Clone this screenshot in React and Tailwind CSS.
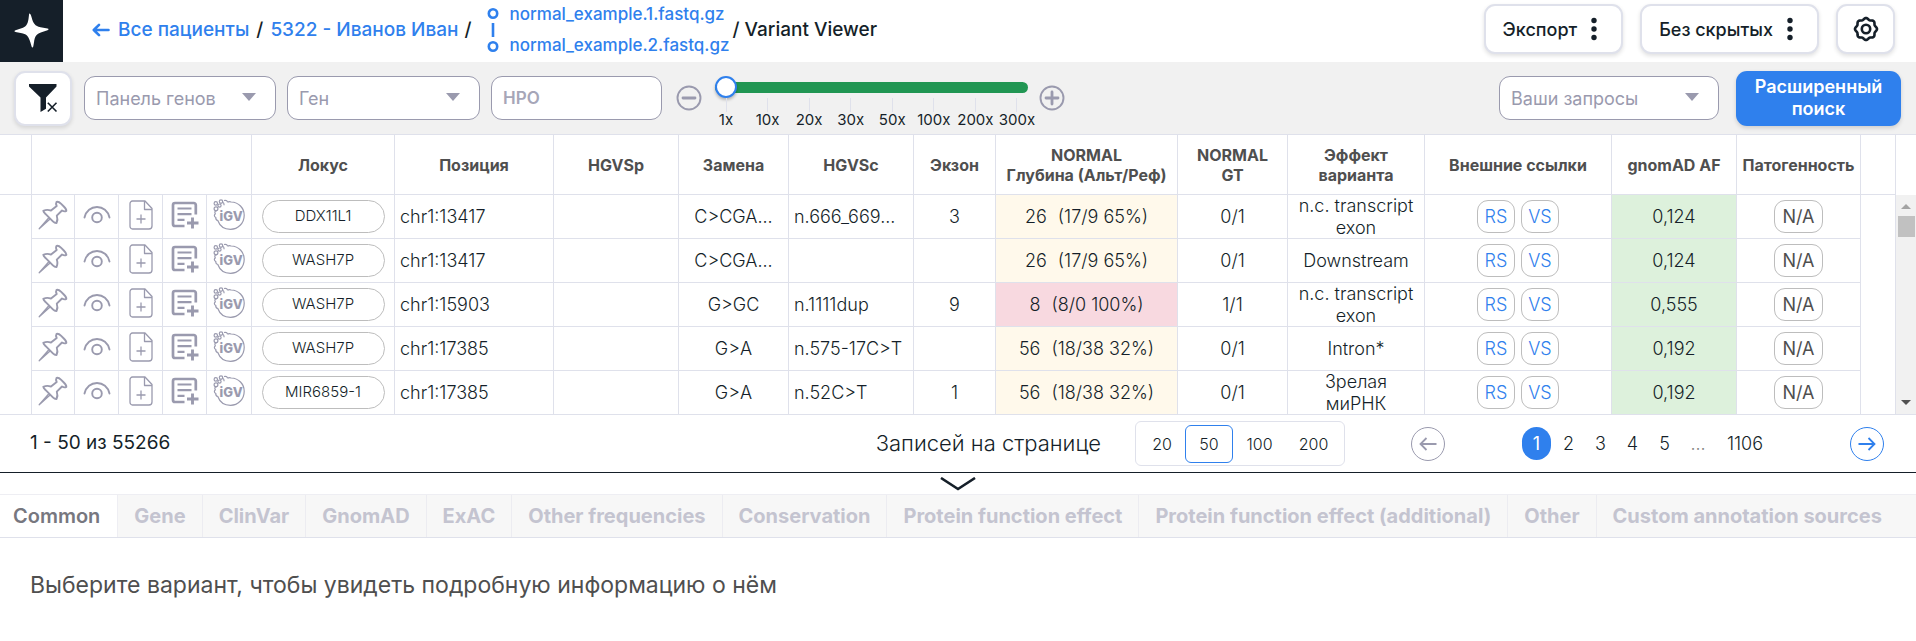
import React from 'react';

const actionIcons = [
  { label: 'Закрепить', Icon: PinIcon },
  { label: 'Просмотрено', Icon: EyeIcon },
  { label: 'Добавить в отчёт', Icon: FileIcon },
  { label: 'Добавить заметку', Icon: NoteIcon },
  { label: 'IGV', Icon: IgvIcon },
];

const rows = [
  { locus: 'DDX11L1', pos: 'chr1:13417', sub: 'C>CGA...', hgvsc: 'n.666_669...', exon: '3', depth: '26', ratio: '(17/9 65%)', low: false, gt: '0/1', effect: 'n.c. transcript exon', af: '0,124' },
  { locus: 'WASH7P', pos: 'chr1:13417', sub: 'C>CGA...', hgvsc: '', exon: '', depth: '26', ratio: '(17/9 65%)', low: false, gt: '0/1', effect: 'Downstream', af: '0,124' },
  { locus: 'WASH7P', pos: 'chr1:15903', sub: 'G>GC', hgvsc: 'n.1111dup', exon: '9', depth: '8', ratio: '(8/0 100%)', low: true, gt: '1/1', effect: 'n.c. transcript exon', af: '0,555' },
  { locus: 'WASH7P', pos: 'chr1:17385', sub: 'G>A', hgvsc: 'n.575-17C>T', exon: '', depth: '56', ratio: '(18/38 32%)', low: false, gt: '0/1', effect: 'Intron*', af: '0,192' },
  { locus: 'MIR6859-1', pos: 'chr1:17385', sub: 'G>A', hgvsc: 'n.52C>T', exon: '1', depth: '56', ratio: '(18/38 32%)', low: false, gt: '0/1', effect: 'Зрелая миРНК', af: '0,192' },
];

const headings = ['Локус', 'Позиция', 'HGVSp', 'Замена', 'HGVSc', 'Экзон', 'NORMAL\nГлубина (Альт/Реф)', 'NORMAL\nGT', 'Эффект\nварианта', 'Внешние ссылки', 'gnomAD AF', 'Патогенность'];

const tabs = ['Gene', 'ClinVar', 'GnomAD', 'ExAC', 'Other frequencies', 'Conservation', 'Protein function effect', 'Protein function effect (additional)', 'Other', 'Custom annotation sources'];

const coverage = ['1x', '10x', '20x', '30x', '50x', '100x', '200x', '300x'];

function PinIcon() {
  return (
    <svg width="30" height="30" viewBox="0 0 30 30" fill="none" stroke="#9a9aae" strokeWidth="1.900" strokeLinejoin="round" strokeLinecap="round">
      <path d="M18.6 1.8c1.5-.5 3 .5 4.600 2.100l2.600 2.600c1.600 1.600 2.900 3 2.500 4.400-1.300.8-2.900.4-4.300-.4l-5.200 5.200c.9 2.500.8 5-.3 7.300-1.400.2-2.600-.7-3.600-1.700l-6.700-6.700C6.900 13.300 5.300 12 5.300 10.800c2.500-1.200 5.300-1.200 7.700-.2l5.700-4.600C18 4.700 17.800 3.100 18.600 1.800z" />
      <path d="M10.600 18 1.200 28.800l10.600-9.600" strokeWidth="1.300" />
    </svg>
  );
}

function EyeIcon() {
  return (
    <svg width="28" height="20" viewBox="0 0 28 20" fill="none" stroke="#9a9aae" strokeWidth="1.900" strokeLinecap="round">
      <path d="M1.500 12.500C3 6 8 2 14 2s11 4 12.500 10.500" />
      <circle cx="14" cy="12.500" r="4.800" />
    </svg>
  );
}

function FileIcon() {
  return (
    <svg width="24" height="30" viewBox="0 0 24 30" fill="none" stroke="#9a9aae" strokeWidth="1.300" strokeLinejoin="round">
      <path d="M3.500 1H16l7 7.500V26a3 3 0 0 1-3 3H3.500A2.600 2.600 0 0 1 1 26.300V3.700A2.600 2.600 0 0 1 3.500 1z" />
      <path d="M15.500 1v8.500H23M12 14.500v9M7.500 19h9" />
    </svg>
  );
}

function NoteIcon() {
  return (
    <svg width="28" height="28" viewBox="0 0 28 28" fill="none" stroke="#9a9aae" strokeWidth="2.700">
      <path d="M24.800 13.500V4a2 2 0 0 0-2-2H4a2 2 0 0 0-2 2v19a2 2 0 0 0 2 2h9.500" />
      <path d="M6.500 7.500h14M6.500 13.200h14M6.500 18.800h7" strokeWidth="2.200" />
      <path d="M21.500 16.500V27.500M16 22h11.500" strokeWidth="2.900" />
    </svg>
  );
}

function IgvIcon() {
  return (
    <svg width="32" height="32" viewBox="0 0 32 32" fill="none" stroke="#9a9aae" strokeWidth="1.200">
      <path d="M14.500 3.200c1.500-.9 3-.4 3.700-.2 7.500.3 13 6 13 13.200C31.200 24.300 25 30.300 17.500 30.300c-6 0-10.800-3.500-12.700-8.800C3 21 2.600 20 2.800 18.500 1 17.500 1 16 2.300 14.800 1.300 13.200 2 11.600 4 11.600" />
      <circle cx="2.800" cy="4.400" r="1.700" />
      <circle cx="3" cy="9.800" r="1.900" />
      <circle cx="6.500" cy="6.600" r="1.600" />
      <circle cx="8" cy="2.600" r="1.700" />
      <path d="M9.800 3.300c1 .4 1.300 1.600 1.300 2.900M11 1.500c1.700-.6 3.200.2 3.500 1.700" />
      <text x="6.500" y="21.500" fontFamily="Inter, sans-serif" fontSize="13" fontWeight="800" fill="#9a9aae" stroke="none">iGV</text>
    </svg>
  );
}

function GearIcon() {
  const points = Array.from({ length: 97 }, (_, i) => {
    const a = (i / 96) * Math.PI * 2;
    const r = 10.2 + 0.8 * Math.cos(8 * a);
    return `${(13 + r * Math.sin(a)).toFixed(2)},${(13 - r * Math.cos(a)).toFixed(2)}`;
  }).join(' ');
  return (
    <svg width="26" height="26" viewBox="0 0 26 26" fill="none" stroke="#151f29" strokeWidth="2.600" strokeLinejoin="round">
      <polygon points={points} />
      <circle cx="13" cy="13" r="4.200" />
    </svg>
  );
}

function Dots() {
  return (
    <svg width="6" height="24" viewBox="0 0 6 24" fill="#151f29">
      <circle cx="3" cy="3.500" r="2.700" />
      <circle cx="3" cy="12" r="2.700" />
      <circle cx="3" cy="20.500" r="2.700" />
    </svg>
  );
}

function RoundSign({ plus }) {
  return (
    <svg width="26" height="26" viewBox="0 0 26 26" fill="none" stroke="#9a9aae" strokeWidth="1.900">
      <circle cx="13" cy="13" r="11.500" />
      <path d={plus ? 'M7 13h12M13 7v12' : 'M7 13h12'} strokeWidth="2.800" strokeLinecap="round" />
    </svg>
  );
}

function Select({ label, className }) {
  return (
    <div className={`relative ${className}`}>
      <select aria-label={label} className="h-11 w-full appearance-none rounded-[11px] border border-[#9a9aae] bg-white pr-10 pl-[11px] text-[18px] text-[#9a9aae]">
        <option>{label}</option>
      </select>
      <svg className="pointer-events-none absolute top-[17px] right-5" width="14" height="8" viewBox="0 0 14 8" fill="#9a9aae">
        <path d="M0 0h14L7 8z" />
      </svg>
    </div>
  );
}

function ArrowCircle({ label, next }) {
  return (
    <button type="button" aria-label={label} className={`flex size-[34px] shrink-0 items-center justify-center rounded-full border ${next ? 'border-[#2f80ed] text-[#2f80ed]' : 'border-[#9a9aae] text-[#9a9aae]'}`}>
      <svg className={next ? 'rotate-180' : ''} width="18" height="14" viewBox="0 0 18 14" fill="none" stroke="currentColor" strokeWidth="1.800">
        <path d="M17.500 7H1.500M7.500 1l-6 6 6 6" />
      </svg>
    </button>
  );
}

const outlined = 'flex items-center rounded-[11px] border-2 border-[#dfe1eb] bg-white shadow-[0_2px_4px_rgba(0,0,0,0.12)]';
const cell = 'h-11 border-r border-b border-[#dfe1eb] p-0';
const chip = 'inline-flex h-[33px] items-center justify-center rounded-[11px] border border-[#bdbdbd]';

export default function App() {
  return (
    <div className="min-h-screen bg-white font-[Inter,sans-serif] text-[18px] text-[#151f29]">
      <header className="flex h-[62px] items-center pr-[21px]">
        <a href="#home" aria-label="Главная" className="flex h-[62px] w-[63px] items-center justify-center bg-[#151f29]">
          <svg width="36" height="36" viewBox="0 0 36 36" fill="#fff">
            <path d="M15.500.5c.7 0 1.200.5 2 3.500 1.700 6.500 3.500 9 9 10.300l7 1.300c1.400.3 1.400 1.200 0 1.600l-6 2c-5.500 1.900-6.600 4-7.500 10l-.7 4c-.3 1.600-1.400 1.600-1.800 0l-1-3.500C14.600 23.500 13 21.200 8 20.200l-6.500-1.300c-1.500-.3-1.500-1.100 0-1.600l6-2c4.500-1.600 6-3.500 7-9.300l.5-4c.1-1 .2-1.500.5-1.500z" />
          </svg>
        </a>
        <nav aria-label="Навигация" className="ml-[29px] flex flex-1 items-center pb-[2px] text-[19px] font-medium whitespace-nowrap">
          <a href="#patients" className="flex items-center gap-2 text-[#2f80ed]">
            <svg width="18" height="14" viewBox="0 0 18 14" fill="none" stroke="currentColor" strokeWidth="2.600" strokeLinecap="round" strokeLinejoin="round">
              <path d="M16.500 7H2M7 1.800 1.800 7 7 12.200" />
            </svg>
            Все пациенты
          </a>
          <span className="px-[7px]">/</span>
          <a href="#patient" className="text-[#2f80ed]">5322 - Иванов Иван</a>
          <span className="pl-[6px]">/</span>
          <svg className="ml-[15px] shrink-0" width="12" height="46" viewBox="0 0 12 46" fill="none" stroke="#2f80ed" strokeWidth="2.600">
            <circle cx="6" cy="6.500" r="4.200" />
            <circle cx="6" cy="39.500" r="4.200" />
            <path d="M6 16v14" />
          </svg>
          <span className="mr-[3px] ml-[11px] flex flex-col text-[17px] leading-[31px] text-[#2f80ed]">
            <a href="#file-1">normal_example.1.fastq.gz</a>
            <a href="#file-2">normal_example.2.fastq.gz</a>
          </span>
          <span>/ Variant Viewer</span>
        </nav>
        <div className="flex gap-[17px] pb-1 font-medium">
          <button type="button" className={`${outlined} h-[50px] gap-[14px] pr-[24px] pl-[17px]`}>Экспорт<Dots /></button>
          <button type="button" className={`${outlined} h-[50px] gap-[14px] pr-[24px] pl-[17px]`}>Без скрытых<Dots /></button>
          <button type="button" aria-label="Настройки" className={`${outlined} h-[50px] w-[59px] justify-center`}><GearIcon /></button>
        </div>
      </header>

      <section aria-label="Фильтры" className="flex h-[72px] items-center bg-[#f1f1f1] pr-[15px] pl-[14px]">
        <button type="button" aria-label="Сбросить фильтры" className={`${outlined} h-[55px] w-[58px] justify-center`}>
          <svg width="30" height="30" viewBox="0 0 30 30" fill="#151f29">
            <path d="M1 1h27.500v2.500L18 14.500v11.200L12.500 29V14.500L1 3.500z" />
            <path d="M19.800 19.800l8.700 8.700M28.500 19.800l-8.700 8.700" fill="none" stroke="#fff" strokeWidth="3.600" />
            <path d="M19.800 19.800l8.700 8.700M28.500 19.800l-8.700 8.700" fill="none" stroke="#151f29" strokeWidth="1.600" />
          </svg>
        </button>
        <Select label="Панель генов" className="ml-3 w-[192px]" />
        <Select label="Ген" className="ml-[11px] w-[193px]" />
        <input aria-label="HPO" placeholder="HPO" className="ml-[11px] h-11 w-[171px] rounded-[11px] border border-[#9a9aae] bg-white px-[11px] text-[17px] font-semibold placeholder:text-[#a6a6b8]" />
        <button type="button" aria-label="Уменьшить" className="ml-[14px]"><RoundSign /></button>
        <div className="ml-[13px] flex w-[313px] flex-col pt-2">
          <input
            type="range"
            min="0"
            max="7"
            defaultValue="0"
            aria-label="Покрытие"
            className="h-[22px] w-full appearance-none bg-transparent [&::-webkit-slider-runnable-track]:h-[11px] [&::-webkit-slider-runnable-track]:rounded-full [&::-webkit-slider-runnable-track]:bg-[#219653] [&::-webkit-slider-thumb]:-mt-[6px] [&::-webkit-slider-thumb]:size-[22px] [&::-webkit-slider-thumb]:appearance-none [&::-webkit-slider-thumb]:rounded-full [&::-webkit-slider-thumb]:border-2 [&::-webkit-slider-thumb]:border-solid [&::-webkit-slider-thumb]:border-[#2f80ed] [&::-webkit-slider-thumb]:bg-white [&::-webkit-slider-thumb]:shadow-[0_2px_3px_rgba(0,0,0,0.25)]"
          />
          <div className="flex justify-between px-[11px] text-[15px] leading-4">
            {coverage.map((c) => (
              <span key={c} className="flex w-0 flex-col items-center">
                <span className="h-[14px] w-px bg-[#dfe1eb]" />
                <span>{c}</span>
              </span>
            ))}
          </div>
        </div>
        <button type="button" aria-label="Увеличить" className="ml-[11px]"><RoundSign plus /></button>
        <Select label="Ваши запросы" className="ml-auto w-[220px]" />
        <button type="button" className="ml-[17px] h-[55px] w-[165px] rounded-[11px] bg-[#2f80ed] px-4 leading-[22px] font-semibold text-white shadow-[0_2px_4px_rgba(0,0,0,0.15)]">
          Расширенный поиск
        </button>
      </section>

      <section aria-label="Варианты" className="flex border-t border-[#dfe1eb]">
        <table className="min-w-0 flex-1 table-fixed border-separate border-spacing-0 text-center font-light">
          <colgroup>
            <col className="w-[32px]" />
            <col className="w-[43px]" />
            <col className="w-[44px]" />
            <col className="w-[44px]" />
            <col className="w-[44px]" />
            <col className="w-[45px]" />
            <col className="w-[143px]" />
            <col className="w-[159px]" />
            <col className="w-[125px]" />
            <col className="w-[110px]" />
            <col className="w-[125px]" />
            <col className="w-[82px]" />
            <col className="w-[182px]" />
            <col className="w-[110px]" />
            <col className="w-[137px]" />
            <col className="w-[187px]" />
            <col className="w-[125px]" />
            <col className="w-[124px]" />
            <col />
          </colgroup>
          <thead className="text-[16px] leading-5 text-[#4f4f4f]">
            <tr>
              <th className="h-[60px] border-r border-b border-[#dfe1eb] p-0" />
              <th colSpan={5} className="border-r border-b border-[#dfe1eb] p-0" />
              {headings.map((h) => (
                <th key={h} scope="col" className="border-r border-b border-[#dfe1eb] p-0 font-bold whitespace-pre-line">{h}</th>
              ))}
              <th className="border-r border-b border-[#dfe1eb] p-0" />
            </tr>
          </thead>
          <tbody>
            {rows.map((r, i) => (
              <tr key={i}>
                {i === 0 && <td rowSpan={5} className={cell} />}
                {actionIcons.map(({ label, Icon }) => (
                  <td key={label} className={cell}>
                    <button type="button" aria-label={label} className="flex h-[43px] w-full items-center justify-center pb-[3px]"><Icon /></button>
                  </td>
                ))}
                <td className={cell}>
                  <a href="#locus" className="mx-auto flex h-[33px] w-[123px] items-center justify-center rounded-full border border-[#bdbdbd] text-[15px]">{r.locus}</a>
                </td>
                <td className={`${cell} pl-[5px] text-left`}>{r.pos}</td>
                <td className={cell} />
                <td className={cell}>{r.sub}</td>
                <td className={`${cell} pl-[5px] text-left`}>{r.hgvsc}</td>
                <td className={cell}>{r.exon}</td>
                <td className={`${cell} ${r.low ? 'bg-[#f8d9e0]' : 'bg-[#fff9eb]'}`}>
                  <span className="flex justify-center gap-[11px]"><span>{r.depth}</span><span>{r.ratio}</span></span>
                </td>
                <td className={cell}>{r.gt}</td>
                <td className={`${cell} leading-[22px]`}><div className="flex h-[43px] items-center justify-center overflow-hidden px-2">{r.effect}</div></td>
                <td className={cell}>
                  <span className="flex justify-center gap-[6px] text-[#2f80ed]">
                    <a href="#rs" className={`${chip} w-[38px]`}>RS</a>
                    <a href="#vs" className={`${chip} w-[38px]`}>VS</a>
                  </span>
                </td>
                <td className={`${cell} bg-[#ddf1dc]`}>{r.af}</td>
                <td className={cell}>
                  <button type="button" className={`${chip} w-[49px] align-middle font-normal text-[#4f4f4f]`}>N/A</button>
                </td>
                {i === 0 && <td rowSpan={5} className={cell} />}
              </tr>
            ))}
          </tbody>
        </table>
        <div className="flex w-5 shrink-0 flex-col border-b border-[#dfe1eb] pt-[60px]">
          <div className="flex flex-1 flex-col items-center bg-[#f1f1f1] py-[9px]">
            <svg width="10" height="5" viewBox="0 0 10 5" fill="#a3a3a3"><path d="M0 5 5 0l5 5z" /></svg>
            <div className="mt-[7px] h-[21px] w-[17px] bg-[#c1c1c1]" />
            <svg className="mt-auto" width="10" height="5" viewBox="0 0 10 5" fill="#505050"><path d="M0 0h10L5 5z" /></svg>
          </div>
        </div>
      </section>

      <section aria-label="Страницы" className="flex h-[58px] items-center border-b border-[#151f29] pr-8 pl-[30px]">
        <span className="text-[19px]">1 - 50 из 55266</span>
        <span className="ml-auto text-[22px] font-light">Записей на странице</span>
        <div className="ml-[34px] flex h-[45px] items-center rounded-md border border-[#dfe1eb] px-[3px] text-[16px] font-light">
          <button type="button" className="h-[38px] w-[46px]">20</button>
          <button type="button" aria-pressed="true" className="h-[38px] w-[48px] rounded-md border border-[#2f80ed]">50</button>
          <button type="button" className="h-[38px] w-[53px]">100</button>
          <button type="button" className="h-[38px] w-[55px]">200</button>
        </div>
        <div className="ml-[66px]"><ArrowCircle label="Назад" /></div>
        <div className="ml-[77px] flex items-center gap-[3px] font-light">
          <button type="button" aria-current="page" className="h-[33px] w-[29px] rounded-full bg-[#2f80ed] font-normal text-white">1</button>
          <button type="button" className="h-[33px] w-[29px]">2</button>
          <button type="button" className="h-[33px] w-[29px]">3</button>
          <button type="button" className="h-[33px] w-[29px]">4</button>
          <button type="button" className="h-[33px] w-[29px]">5</button>
          <span className="w-[32px] text-center text-[#828282]">...</span>
          <button type="button" className="h-[33px] w-[56px]">1106</button>
        </div>
        <div className="ml-[77px]"><ArrowCircle label="Вперёд" next /></div>
      </section>

      <button type="button" aria-label="Свернуть панель" className="flex h-[21px] w-full items-center justify-center">
        <svg width="36" height="14" viewBox="0 0 36 14" fill="none" stroke="#151f29" strokeWidth="2.600">
          <path d="M1 1l17 11L35 1" />
        </svg>
      </button>

      <div role="tablist" className="flex h-[44px] overflow-hidden border-t border-b border-t-[#eeeef3] border-b-[#dfe1eb] bg-[#f7f7f7] text-[20px] font-bold whitespace-nowrap text-[#c4c4d0]">
        <button type="button" role="tab" aria-selected="true" className="border-r border-[#eeeef3] bg-white pr-[17px] pl-[13px] font-semibold text-[#77777f]">Common</button>
        {tabs.map((t) => (
          <button key={t} type="button" role="tab" aria-selected="false" className="border-r border-[#ececf1] px-4 last:border-r-0">{t}</button>
        ))}
      </div>

      <p className="px-[30px] py-8 text-[23px] leading-[30px] text-[#4f4f4f]">Выберите вариант, чтобы увидеть подробную информацию о нём</p>
    </div>
  );
}
